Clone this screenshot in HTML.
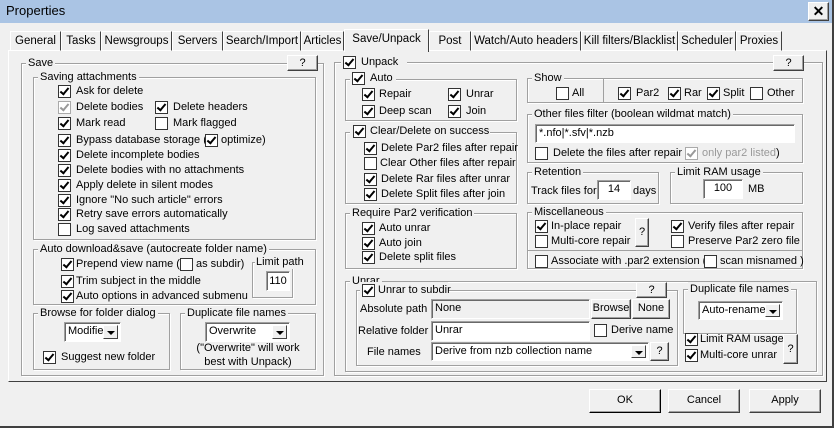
<!DOCTYPE html><html><head><meta charset="utf-8"><style>
*{box-sizing:border-box}
body{margin:0;width:834px;height:428px;overflow:hidden;background:#f0f0f0;font:11px "Liberation Sans",sans-serif;color:#000;position:relative}
div,span{position:absolute}
.t{white-space:nowrap;line-height:14px}
.c{width:13px;height:13px;border:1px solid #333;background:#fff}
.k::after{content:"";position:absolute;left:3px;top:0px;width:3px;height:7px;border:solid #000;border-width:0 2px 2px 0;transform:rotate(40deg)}
.dk::after{border-color:#999}
.dk{border-color:#aaa}
.g{border:1px solid #a0a0a0;box-shadow:inset 1px 1px #fff,1px 1px #fff}
.l{top:-8px;left:4px;background:#f0f0f0;padding:0 2px;white-space:nowrap;line-height:14px}
.b{border:1px solid;border-color:#fff #404040 #404040 #fff;box-shadow:inset -1px -1px #a0a0a0;background:#f0f0f0;text-align:center;line-height:14px}
.i{border:1px solid;border-color:#a0a0a0 #fff #fff #a0a0a0;box-shadow:inset 1px 1px #696969;background:#fff;padding:2px 3px;line-height:13px;white-space:nowrap;overflow:hidden}
.dd{right:2px;top:2px;bottom:2px;width:15px;border:1px solid;border-color:#fff #404040 #404040 #fff;background:#f0f0f0}
.dd::after{content:"";position:absolute;left:3px;top:5px;border:4px solid transparent;border-top:4px solid #000;border-bottom:0}
.tab{top:31px;height:20px;border:1px solid;border-color:#fff #404040 transparent #fff;padding:2px 0;text-align:center;white-space:nowrap;line-height:14px;font-size:11.5px}
</style></head><body>
<div style="left:0;top:0;width:834px;height:23px;background:#aac4e4"></div>
<div class="t" style="left:6px;top:4px;font-size:13px">Properties</div>
<div class="b" style="left:808px;top:2px;width:21px;height:19px;font-weight:bold;font-size:14px;line-height:16px">✕</div>
<div style="left:832px;top:0;width:2px;height:428px;background:#404040"></div>
<div style="left:0;top:426px;width:834px;height:2px;background:#404040"></div>

<div style="left:8px;top:50px;width:819px;height:332px;border:1px solid;border-color:#fff #404040 #404040 #fff"></div>
<div class="tab" style="left:10px;width:51px">General</div>
<div class="tab" style="left:61px;width:40px">Tasks</div>
<div class="tab" style="left:101px;width:71px">Newsgroups</div>
<div class="tab" style="left:172px;width:51px">Servers</div>
<div class="tab" style="left:223px;width:78px">Search/Import</div>
<div class="tab" style="left:301px;width:43px">Articles</div>
<div class="tab" style="left:344px;top:29px;width:85px;height:23px;background:#f0f0f0;border-bottom:0">Save/Unpack</div>
<div class="tab" style="left:429px;width:42px">Post</div>
<div class="tab" style="left:471px;width:110px">Watch/Auto headers</div>
<div class="tab" style="left:581px;width:97px">Kill filters/Blacklist</div>
<div class="tab" style="left:678px;width:58px">Scheduler</div>
<div class="tab" style="left:736px;width:46px">Proxies</div>

<!-- SAVE -->
<div class="g" style="left:21px;top:63px;width:303px;height:313px"><span class="l">Save</span></div>
<div class="b" style="left:287px;top:55px;width:31px;height:16px">?</div>
<div class="g" style="left:33px;top:77px;width:283px;height:163px"><span class="l">Saving attachments</span></div>
<div class="c k" style="left:58px;top:85px"></div><div class="t" style="left:76px;top:84px">Ask for delete</div>
<div class="c k dk" style="left:58px;top:101px"></div><div class="t" style="left:76px;top:100px">Delete bodies</div>
<div class="c k" style="left:155px;top:101px"></div><div class="t" style="left:173px;top:100px">Delete headers</div>
<div class="c k" style="left:58px;top:117px"></div><div class="t" style="left:76px;top:116px">Mark read</div>
<div class="c" style="left:155px;top:117px"></div><div class="t" style="left:173px;top:116px">Mark flagged</div>
<div class="c k" style="left:58px;top:134px"></div><div class="t" style="left:76px;top:133px">Bypass database storage (</div><div class="c k" style="left:205px;top:134px"></div><div class="t" style="left:221px;top:133px">optimize)</div>
<div class="c k" style="left:58px;top:149px"></div><div class="t" style="left:76px;top:148px">Delete incomplete bodies</div>
<div class="c k" style="left:58px;top:164px"></div><div class="t" style="left:76px;top:163px">Delete bodies with no attachments</div>
<div class="c k" style="left:58px;top:179px"></div><div class="t" style="left:76px;top:178px">Apply delete in silent modes</div>
<div class="c k" style="left:58px;top:194px"></div><div class="t" style="left:76px;top:193px">Ignore "No such article" errors</div>
<div class="c k" style="left:58px;top:208px"></div><div class="t" style="left:76px;top:207px">Retry save errors automatically</div>
<div class="c" style="left:58px;top:223px"></div><div class="t" style="left:76px;top:222px">Log saved attachments</div>

<div class="g" style="left:33px;top:249px;width:283px;height:56px"><span class="l">Auto download&amp;save (autocreate folder name)</span></div>
<div class="c k" style="left:61px;top:258px"></div><div class="t" style="left:76px;top:257px">Prepend view name (</div><div class="c" style="left:180px;top:258px"></div><div class="t" style="left:196px;top:257px">as subdir)</div>
<div class="c k" style="left:61px;top:275px"></div><div class="t" style="left:76px;top:274px">Trim subject in the middle</div>
<div class="c k" style="left:61px;top:290px"></div><div class="t" style="left:76px;top:289px">Auto options in advanced submenu</div>
<div class="g" style="left:252px;top:262px;width:41px;height:36px"><span class="l" style="left:2px;padding:0 1px">Limit path</span></div>
<div class="i" style="left:266px;top:271px;width:24px;height:20px;text-align:center;padding:3px 0">110</div>

<div class="g" style="left:33px;top:313px;width:137px;height:57px"><span class="l">Browse for folder dialog</span></div>
<div class="i" style="left:64px;top:322px;width:57px;height:20px">Modified<span class="dd"></span></div>
<div class="c k" style="left:43px;top:351px"></div><div class="t" style="left:61px;top:350px">Suggest new folder</div>
<div class="g" style="left:180px;top:313px;width:136px;height:57px"><span class="l">Duplicate file names</span></div>
<div class="i" style="left:205px;top:322px;width:85px;height:20px">Overwrite<span class="dd"></span></div>
<div class="t" style="left:180px;top:341px;width:136px;text-align:center">("Overwrite" will work<br>best with Unpack)</div>

<!-- UNPACK -->
<div class="g" style="left:334px;top:62px;width:489px;height:314px"></div>
<div class="t" style="left:341px;top:54px;background:#f0f0f0;width:66px;height:16px"></div>
<div class="c k" style="left:343px;top:56px"></div><div class="t" style="left:361px;top:55px">Unpack</div>
<div class="b" style="left:773px;top:55px;width:31px;height:16px">?</div>

<div class="g" style="left:345px;top:79px;width:172px;height:42px"></div>
<div class="t" style="left:350px;top:71px;background:#f0f0f0;width:46px;height:16px"></div>
<div class="c k" style="left:352px;top:72px"></div><div class="t" style="left:370px;top:71px">Auto</div>
<div class="c k" style="left:362px;top:88px"></div><div class="t" style="left:379px;top:87px">Repair</div>
<div class="c k" style="left:448px;top:88px"></div><div class="t" style="left:466px;top:87px">Unrar</div>
<div class="c k" style="left:362px;top:105px"></div><div class="t" style="left:379px;top:104px">Deep scan</div>
<div class="c k" style="left:448px;top:105px"></div><div class="t" style="left:466px;top:104px">Join</div>

<div class="g" style="left:345px;top:132px;width:172px;height:72px"></div>
<div class="t" style="left:350px;top:124px;background:#f0f0f0;width:140px;height:16px"></div>
<div class="c k" style="left:353px;top:125px"></div><div class="t" style="left:370px;top:124px">Clear/Delete on success</div>
<div class="c k" style="left:364px;top:142px"></div><div class="t" style="left:381px;top:141px">Delete Par2 files after repair</div>
<div class="c" style="left:364px;top:157px"></div><div class="t" style="left:380px;top:156px">Clear Other files after repair</div>
<div class="c k" style="left:364px;top:173px"></div><div class="t" style="left:381px;top:172px">Delete Rar files after unrar</div>
<div class="c k" style="left:364px;top:188px"></div><div class="t" style="left:381px;top:187px">Delete Split files after join</div>

<div class="g" style="left:345px;top:213px;width:172px;height:56px"><span class="l">Require Par2 verification</span></div>
<div class="c k" style="left:362px;top:222px"></div><div class="t" style="left:379px;top:221px">Auto unrar</div>
<div class="c k" style="left:362px;top:237px"></div><div class="t" style="left:379px;top:236px">Auto join</div>
<div class="c k" style="left:362px;top:251px"></div><div class="t" style="left:379px;top:250px">Delete split files</div>

<div class="g" style="left:527px;top:78px;width:276px;height:25px"><span class="l">Show</span></div>
<div style="left:603px;top:79px;width:1px;height:23px;background:#a0a0a0"></div>
<div class="c" style="left:556px;top:87px"></div><div class="t" style="left:572px;top:86px">All</div>
<div class="c k" style="left:618px;top:87px"></div><div class="t" style="left:636px;top:86px">Par2</div>
<div class="c k" style="left:668px;top:87px"></div><div class="t" style="left:684px;top:86px">Rar</div>
<div class="c k" style="left:707px;top:87px"></div><div class="t" style="left:723px;top:86px">Split</div>
<div class="c" style="left:750px;top:87px"></div><div class="t" style="left:767px;top:86px">Other</div>

<div class="g" style="left:527px;top:114px;width:276px;height:49px"><span class="l">Other files filter (boolean wildmat match)</span></div>
<div class="i" style="left:535px;top:124px;width:260px;height:19px">*.nfo|*.sfv|*.nzb</div>
<div class="c" style="left:535px;top:147px"></div><div class="t" style="left:553px;top:146px">Delete the files after repair (</div><div class="c k dk" style="left:685px;top:147px"></div><div class="t" style="left:702px;top:146px;color:#999">only par2 listed</div><div class="t" style="left:776px;top:146px">)</div>

<div class="g" style="left:527px;top:172px;width:132px;height:32px"><span class="l">Retention</span></div>
<div class="t" style="left:531px;top:184px">Track files for</div>
<div class="i" style="left:597px;top:180px;width:34px;height:20px;text-align:center">14</div>
<div class="t" style="left:633px;top:184px">days</div>
<div class="g" style="left:670px;top:172px;width:133px;height:32px"><span class="l">Limit RAM usage</span></div>
<div class="i" style="left:703px;top:179px;width:40px;height:20px;text-align:center">100</div>
<div class="t" style="left:748px;top:182px">MB</div>

<div class="g" style="left:527px;top:212px;width:276px;height:57px"><span class="l">Miscellaneous</span></div>
<div style="left:528px;top:250px;width:274px;height:1px;background:#a0a0a0"></div>
<div class="c k" style="left:535px;top:220px"></div><div class="t" style="left:551px;top:219px">In-place repair</div>
<div class="c" style="left:535px;top:235px"></div><div class="t" style="left:551px;top:234px">Multi-core repair</div>
<div class="b" style="left:635px;top:218px;width:14px;height:29px;line-height:27px">?</div>
<div class="c k" style="left:671px;top:220px"></div><div class="t" style="left:688px;top:219px">Verify files after repair</div>
<div class="c" style="left:671px;top:235px"></div><div class="t" style="left:688px;top:234px">Preserve Par2 zero file</div>
<div class="c" style="left:535px;top:255px"></div><div class="t" style="left:551px;top:254px">Associate with .par2 extension (</div><div class="c" style="left:704px;top:255px"></div><div class="t" style="left:720px;top:254px">scan misnamed )</div>

<div class="g" style="left:345px;top:281px;width:472px;height:91px"><span class="l">Unrar</span></div>
<div class="g" style="left:356px;top:290px;width:322px;height:76px"></div>
<div class="t" style="left:360px;top:282px;background:#f0f0f0;width:88px;height:16px"></div>
<div class="c k" style="left:362px;top:284px"></div><div class="t" style="left:378px;top:283px">Unrar to subdir</div>
<div class="b" style="left:636px;top:282px;width:31px;height:16px">?</div>
<div class="t" style="left:360px;top:302px">Absolute path</div>
<div class="i" style="left:431px;top:299px;width:159px;height:20px;background:#f0f0f0">None</div>
<div class="b" style="left:591px;top:299px;width:40px;height:20px;line-height:17px">Browse</div>
<div class="b" style="left:632px;top:299px;width:38px;height:20px;line-height:17px">None</div>
<div class="t" style="left:358px;top:324px">Relative folder</div>
<div class="i" style="left:431px;top:321px;width:159px;height:20px">Unrar</div>
<div class="c" style="left:594px;top:324px"></div><div class="t" style="left:611px;top:323px">Derive name</div>
<div class="t" style="left:367px;top:345px">File names</div>
<div class="i" style="left:431px;top:342px;width:218px;height:19px">Derive from nzb collection name<span class="dd"></span></div>
<div class="b" style="left:650px;top:342px;width:19px;height:19px;line-height:17px">?</div>

<div class="g" style="left:683px;top:289px;width:114px;height:45px"><span class="l">Duplicate file names</span></div>
<div class="i" style="left:698px;top:301px;width:85px;height:19px">Auto-rename<span class="dd"></span></div>
<div class="c k" style="left:685px;top:333px"></div><div class="t" style="left:700px;top:332px">Limit RAM usage</div>
<div class="c k" style="left:685px;top:349px"></div><div class="t" style="left:700px;top:348px">Multi-core unrar</div>
<div class="b" style="left:783px;top:334px;width:15px;height:30px;line-height:28px">?</div>

<div class="b" style="left:589px;top:389px;width:72px;height:24px;line-height:21px;border-color:#fff #000 #000 #fff">OK</div>
<div class="b" style="left:668px;top:389px;width:72px;height:24px;line-height:21px">Cancel</div>
<div class="b" style="left:749px;top:389px;width:72px;height:24px;line-height:21px">Apply</div>
</body></html>
